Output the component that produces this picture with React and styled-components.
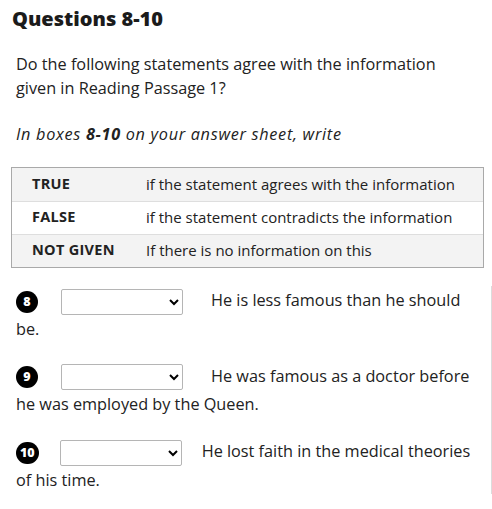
import React from 'react'
import styled, { createGlobalStyle } from 'styled-components'

const Global = createGlobalStyle`
  body {
    margin: 0;
    background: #fff;
    font-family: 'Open Sans', 'Lato', sans-serif;
    color: #222;
  }
`

const Page = styled.div`
  width: 492px;
  height: 509px;
  overflow: hidden;
  padding: 6px 0 0 12px;
  box-sizing: border-box;
`

const Heading = styled.h2`
  margin: 0;
  font-family: 'Open Sans', sans-serif;
  font-weight: 800;
  font-size: 20px;
  line-height: 26px;
  color: #1b1b1b;
`

const Para = styled.p`
  margin: ${(p) => p.$margin || '0'};
  padding-left: 4px;
  font-size: 16.25px;
  line-height: 24px;
  font-style: ${(p) => (p.$italic ? 'italic' : 'normal')};
  letter-spacing: ${(p) => (p.$italic ? '0.7px' : '0')};
  width: 440px;
`

const Table = styled.div`
  width: 473px;
  margin: 21px 0 0 -1px;
  border: 1px solid #a9a9a9;
  box-sizing: border-box;
`

const Row = styled.div`
  display: grid;
  grid-template-columns: 114px 1fr;
  height: 33px;
  box-sizing: border-box;
  align-items: center;
  padding: 0 0 2px 20px;
  font-size: 15px;
  line-height: 20px;
  background: ${(p) => (p.$shade ? '#f3f3f3' : '#fff')};
  & + & {
    border-top: 1px solid #dedede;
    padding-top: 0;
  }
`

const Label = styled.span`
  font-weight: 700;
  font-size: 14.5px;
  letter-spacing: 0.3px;
`

const Questions = styled.div`
  margin-top: 18px;
  border-right: 1px solid #dcdcdc;
  padding-left: 4px;
  padding-right: 16px;
`

const Question = styled.div`
  font-size: 16.25px;
  line-height: 28px;
  margin-bottom: 19px;
`

const Badge = styled.span`
  display: inline-block;
  vertical-align: middle;
  min-width: 22px;
  height: 22px;
  line-height: 22px;
  text-align: center;
  padding: 0 ${(p) => (p.$wide ? '4px' : '0')};
  box-sizing: border-box;
  border-radius: 11px;
  background: #000;
  color: #fff;
  font-family: 'Open Sans', sans-serif;
  font-weight: 800;
  font-size: 12.5px;
  margin-right: ${(p) => (p.$wide ? '21px' : '23px')};
`

const Select = styled.select`
  vertical-align: middle;
  width: 122px;
  height: 26px;
  border: 1px solid #b5b5b5;
  border-radius: 2px;
  background: #fff;
  margin-right: ${(p) => p.$gap}px;
`

const questions = [
  { n: 8, gap: 28, text: 'He is less famous than he should be.' },
  { n: 9, gap: 28, text: 'He was famous as a doctor before he was employed by the Queen.' },
  { n: 10, gap: 20, text: 'He lost faith in the medical theories of his time.' },
]

export default function App() {
  return (
    <Page>
      <Global />
      <Heading>Questions 8-10</Heading>
      <Para $margin="20px 0 0">
        Do the following statements agree with the information given in Reading Passage 1?
      </Para>
      <Para $margin="22px 0 0" $italic>
        In boxes <b>8-10</b> on your answer sheet, write
      </Para>
      <Table>
        <Row $shade>
          <Label>TRUE</Label>
          <span>if the statement agrees with the information</span>
        </Row>
        <Row>
          <Label>FALSE</Label>
          <span>if the statement contradicts the information</span>
        </Row>
        <Row $shade>
          <Label>NOT GIVEN</Label>
          <span>If there is no information on this</span>
        </Row>
      </Table>
      <Questions>
        {questions.map((q) => (
          <Question key={q.n}>
            <Badge $wide={q.n > 9}>{q.n}</Badge>
            <Select $gap={q.gap} aria-label={`Question ${q.n}`}>
              <option value=""></option>
              <option>TRUE</option>
              <option>FALSE</option>
              <option>NOT GIVEN</option>
            </Select>
            {q.text}
          </Question>
        ))}
      </Questions>
    </Page>
  )
}
